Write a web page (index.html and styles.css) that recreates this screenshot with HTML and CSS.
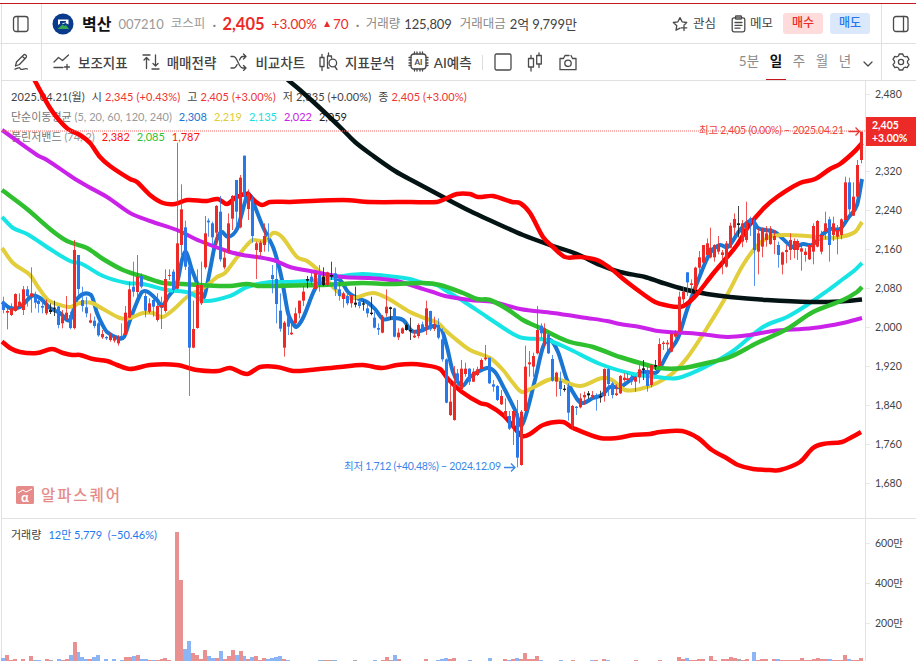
FILE: index.html
```html
<!DOCTYPE html>
<html lang="ko">
<head>
    <meta charset="UTF-8">
    <meta name="viewport" content="width=device-width, initial-scale=1.0">
    <title>벽산 007210</title>
    <link rel="stylesheet" href="styles.css">
</head>
<body>
    <header class="bar stock-bar">
        <div class="side-cell left">
            <svg class="icon" width="18" height="18" viewBox="0 0 18 18"><rect x="1.5" y="1.5" width="14.5" height="15" rx="2.5"/><path d="M6 1.5v15"/></svg>
        </div>
        <div class="stock-info">
            <svg class="logo" width="22" height="22" viewBox="0 0 22 22">
                <circle cx="11" cy="11" r="10.5" fill="#0a3a8c"/>
                <path d="M6 6.500h10.500v5l-3-1.500-2.500 1-1.500-1.500L6 12z" fill="#fff"/>
                <path d="M8 8h6v1.500l-3 .5-3 1z" fill="#0a3a8c"/>
                <path d="M5.500 16l5-4.500 2 1.500 1.500-1 3 4z" fill="#35a853"/>
            </svg>
            <span class="name">벽산</span>
            <span class="code">007210</span>
            <span class="market">코스피</span>
            <span class="dot">·</span>
            <span class="price">2,405</span>
            <span class="rate">+3.00%</span>
            <span class="diff"><i class="up"></i>70</span>
            <span class="dot dot-2">·</span>
            <span class="key">거래량</span>
            <span class="val">125,809</span>
            <span class="key key-2">거래대금</span>
            <span class="val">2억 9,799만</span>
        </div>
        <div class="actions">
            <svg class="icon star" width="17" height="17" viewBox="0 0 17 17"><path d="M8 13.200l-4 2 .8-4.500L1.300 7.500l4.600-.7L8 2.600l2.100 4.200 4.600.7-1.700 1.700M12 10v5.500M9.200 12.800h5.600"/></svg>
            <span class="action-text">관심</span>
            <svg class="icon memo" width="15" height="18" viewBox="0 0 15 18"><rect x="1.200" y="2.800" width="12.600" height="14" rx="1.800"/><rect x="4.500" y="1" width="6" height="3.200" rx=".8"/><path d="M4 7.500h7M4 10.300h7M4 13.200h5"/></svg>
            <span class="action-text">메모</span>
            <span class="btn buy">매수</span>
            <span class="btn sell">매도</span>
        </div>
        <div class="side-cell right">
            <svg class="icon" width="18" height="18" viewBox="0 0 18 18"><rect x="1.500" y="1.500" width="14.500" height="15" rx="2.500"/><path d="M11.500 1.500v15"/></svg>
        </div>
    </header>

    <nav class="bar tool-bar">
        <div class="side-cell left">
            <svg class="icon" width="18" height="18" viewBox="0 0 18 18"><path d="M2.500 13l1-4L10.800 1.800c1-1 3.500 1 2.500 2.400L6.500 11.500l-4 1.500M9.500 3.500l2.500 2.300M2 16.200c3-1.500 4.500-2 5-1s0 1.500 2 1.200 3.500-1.200 5.500-.4"/></svg>
        </div>
        <div class="tools">
            <span class="tool"><svg class="icon" width="18" height="18" viewBox="0 0 18 18"><path d="M1 9l4.500-4.500 4 3L15.500 2M1 14.500h9M14 11.500v5M11.500 14h5"/></svg>보조지표</span>
            <span class="tool"><svg class="icon" width="18" height="18" viewBox="0 0 18 18"><path d="M1 2h7M4.500 15.500V4.500M2 7l2.500-2.500L7 7M10 16h7M13.500 2v10.500M11 10.500l2.500 2.500 2.500-2.500"/></svg>매매전략</span>
            <span class="tool"><svg class="icon" width="18" height="18" viewBox="0 0 18 18"><path d="M1 3.500h2.500c4 0 5 11.500 9 11.500H16M1 15h2.500c1.600 0 2.700-1.500 3.600-3.500M9.500 7c.8-2 1.800-3.500 3.200-3.500H16M13.500 1L16 3.500 13.500 6M13.500 12.500L16 15l-2.500 2.500"/></svg>비교차트</span>
            <span class="tool"><svg class="icon" width="19" height="20" viewBox="0 0 19 20"><path d="M3 2.500v3M3 14.500v4M1 5.500h4v9H1zM9.500 1v3M12.500 6V4h-4v12H10M15.800 14.500l2.200 3"/><circle cx="13.800" cy="11" r="3.800"/></svg>지표분석</span>
            <span class="tool ai"><svg class="icon" width="21" height="21" viewBox="0 0 21 21"><rect x="3" y="3" width="15" height="15" rx="3"/><path d="M6.500 1v2M9 1v2M12 1v2M14.500 1v2M6.500 18v2M9 18v2M12 18v2M14.500 18v2M1 6.500h2M1 9h2M1 12h2M1 14.500h2M18 6.500h2M18 9h2M18 12h2M18 14.500h2"/><text x="10.500" y="13.800" class="chip-text">AI</text></svg>AI예측</span>
            <i class="sep"></i>
            <svg class="icon square" width="18" height="18" viewBox="0 0 18 18"><rect x="1" y="1" width="16" height="16" rx="1.500"/></svg>
            <svg class="icon candles" width="16" height="20" viewBox="0 0 16 20"><path d="M4 3.500v3M4 15v4M1.500 6.500h5V15h-5zM12 .8v2.700M12 12v3.500M9.700 3.500h4.600V12H9.700z"/></svg>
            <svg class="icon camera" width="18" height="17" viewBox="0 0 18 17"><path d="M10 1.500H6l-1.500 3H1v11.200h16V4.500h-3.500L12 1.500"/><circle cx="9" cy="9.300" r="3.200"/></svg>
        </div>
        <div class="periods">
            <span class="minute">5분</span>
            <span class="on">일</span>
            <span>주</span>
            <span>월</span>
            <span>년</span>
            <svg class="icon" width="10" height="6" viewBox="0 0 10 6"><path d="M1 1l4 4 4-4"/></svg>
        </div>
        <div class="side-cell right">
            <svg class="icon" width="18" height="18" viewBox="0 0 18 18"><path d="M7.200 1h3.600l.7 2 1.500.8 2.200-.4 1.800 3-1.500 1.700v1.800l1.500 1.700-1.800 3-2.200-.4-1.500.8-.7 2H7.200l-.7-2-1.500-.8-2.200.4-1.800-3 1.500-1.700V8.100L1 6.400l1.800-3 2.200.4L6.500 3z"/><circle cx="9" cy="9" r="2.600"/></svg>
        </div>
    </nav>

    <main class="chart">
        <div class="legend">
            <div class="row date-row"><span>2025.04.21(월)</span><span>시 <b class="c-up">2,345 (+0.43%)</b></span><span>고 <b class="c-up">2,405 (+3.00%)</b></span><span>저 <b>2,335 (+0.00%)</b></span><span>종 <b class="c-up">2,405 (+3.00%)</b></span></div>
            <div class="row ma-row"><span>단순이동평균 <em>(5, 20, 60, 120, 240)</em></span><b class="c-ma5">2,308</b><b class="c-ma20">2,219</b><b class="c-ma60">2,135</b><b class="c-ma120">2,022</b><b class="c-ma240">2,059</b></div>
            <div class="row bb-row"><span>볼린저밴드 <em>(74, 2)</em></span><b class="c-band">2,382</b><b class="c-mid">2,085</b><b class="c-band">1,787</b></div>
        </div>
        <div class="legend volume-legend">
            <div class="row"><span>거래량</span><b class="c-down">12만 5,779&nbsp; (−50.46%)</b></div>
        </div>
        <div class="watermark">
            <svg width="18" height="18" viewBox="0 0 18 18"><rect width="18" height="18" rx="1.500" fill="#e58c8a"/><path d="M2 7l5-3 3 2L16 3" stroke="#fff" fill="none"/><text x="9" y="15.500" class="alpha">α</text></svg>
            <span>알파스퀘어</span>
        </div>
        <svg id="plot" class="plot" width="916" height="580" viewBox="0 81 916 580"></svg>
    </main>
    <script src="chart.js"></script>
</body>
</html>
```
FILE: styles.css
```css
* {
    box-sizing: border-box;
}
body {
    margin: 0;
    padding-top: 3px;
    height: 661px;
    overflow: hidden;
    background-color: #fff;
    color: #424242;
    font-family: Lato, "Noto Sans CJK KR", sans-serif;
    display: flex;
    flex-direction: column;
}
.bar {
    display: flex;
    align-items: stretch;
    flex: none;
    margin-left: 1px;
    border-left: 1px solid #e0e0e0;
    border-bottom: 1px solid #e0e0e0;
    white-space: nowrap;
}
.stock-bar {
    height: 41px;
    margin-left: 0;
    padding-left: 1px;
    border-top: 1px solid #c4161c;
    border-left: 0;
    background: linear-gradient(#e0e0e0, #e0e0e0) 1px 0 / 1px 100% no-repeat;
}
.tool-bar {
    height: 37px;
}
.side-cell {
    display: flex;
    align-items: center;
    justify-content: center;
    flex: none;
}
.side-cell.left {
    width: 40px;
    border-right: 1px solid #e0e0e0;
}
.stock-bar .side-cell.left {
    width: 41px;
}
.side-cell.right {
    width: 35px;
    padding-left: 3px;
    border-left: 1px solid #e0e0e0;
}
.icon {
    flex: none;
    fill: none;
    stroke: #4a4a4a;
    stroke-width: 1.3;
    stroke-linecap: round;
    stroke-linejoin: round;
}

/* stock summary */
.stock-info {
    display: flex;
    align-items: center;
    flex: 1;
    padding-left: 10px;
}
.stock-info span {
    line-height: 24px;
}
.logo {
    flex: none;
}
.name {
    margin-left: 8px;
    font-size: 16px;
    font-weight: 700;
    color: #111;
}
.code {
    margin-left: 7px;
    font-size: 13px;
    color: #9a9a9a;
}
.market {
    margin-left: 7px;
    font-size: 12.500px;
    color: #9a9a9a;
}
.dot {
    margin: 0 6px 0 7px;
    color: #888;
}
.price {
    font-size: 16.500px;
    font-weight: 700;
    color: #ec2a28;
}
.rate, .diff {
    margin-left: 7px;
    font-size: 13.500px;
    color: #ec2a28;
}
.up {
    display: inline-block;
    margin-right: 3px;
    border: 3.500px solid transparent;
    border-top: 0;
    border-bottom: 6px solid #ec2a28;
    vertical-align: 2px;
}
.key {
    font-size: 12.500px;
    color: #8a8a8a;
}
.key-2 {
    margin-left: 8px;
}
.val {
    margin-left: 4px;
    font-size: 13px;
    letter-spacing: -.1px;
}
.actions {
    display: flex;
    align-items: center;
    padding-right: 11px;
    font-size: 12.500px;
}
.action-text {
    margin-left: 4px;
    padding-bottom: 2px;
}
.memo {
    margin-left: 15px;
}
.btn {
    width: 40px;
    height: 21px;
    border-radius: 3px;
    line-height: 20px;
    text-align: center;
    font-size: 12px;
    font-weight: 500;
}
.buy {
    margin-left: 10px;
    background-color: #fddcdb;
    color: #ec2a28;
}
.sell {
    margin-left: 7px;
    background-color: #dbe8fc;
    color: #2478ee;
}

/* toolbar */
.tools {
    display: flex;
    align-items: center;
    flex: 1;
    padding-left: 11px;
}
.tool {
    display: flex;
    align-items: center;
    gap: 7px;
    margin-right: 14px;
    padding-bottom: 1px;
    font-size: 13.500px;
    font-weight: 500;
}
.ai {
    gap: 5px;
    margin-left: -1px;
}
.chip-text {
    font-size: 8px;
    font-weight: 700;
    text-anchor: middle;
    fill: #4a4a4a;
    stroke: none;
}
.sep {
    width: 1px;
    height: 15px;
    margin: 0 11px 0 -4px;
    background-color: #ddd;
}
.candles {
    margin-left: 15px;
}
.camera {
    margin-left: 16px;
}
.periods {
    display: flex;
    align-items: center;
    font-size: 13.500px;
    color: #8c8c8c;
}
.periods span {
    width: 20px;
    height: 36px;
    line-height: 34px;
    margin-right: 3px;
    text-align: center;
}
.periods .minute {
    width: 24px;
    margin-right: 5px;
}
.periods .on {
    color: #111;
    font-weight: 700;
    border-bottom: 1px solid #c4161c;
}
.periods .icon {
    margin: 3px 8px 0 5px;
}

/* chart */
.chart {
    position: relative;
    flex: 1;
    margin-left: 1px;
    border-left: 1px solid #e0e0e0;
}
.plot {
    position: absolute;
    top: 0;
    left: -2px;
}
.legend {
    position: absolute;
    top: 6px;
    left: 9px;
    font-size: 11px;
    white-space: nowrap;
}
.volume-legend {
    top: 444px;
}
.row {
    display: flex;
    height: 20px;
    line-height: 20px;
    gap: 7px;
}
.date-row {
    letter-spacing: .12px;
}
.row b {
    font-weight: 400;
}
.row em {
    font-style: normal;
    color: #999;
}
.ma-row, .bb-row {
    color: #777;
}
.c-up { color: #ee3432; }
.c-down { color: #2478ee; }
.c-ma5 { color: #1976d2; }
.c-ma20 { color: #e0cc3a; }
.c-ma60 { color: #18e0e0; }
.c-ma120 { color: #c822e6; }
.c-ma240 { color: #222; }
.c-band { color: #f11; }
.c-mid { color: #2fbf2f; }
.watermark {
    position: absolute;
    top: 403px;
    left: 14px;
    display: flex;
    align-items: center;
    gap: 7px;
    font-size: 15.500px;
    font-weight: 500;
    letter-spacing: 1.900px;
    line-height: 22px;
    color: #e58c8a;
}
.alpha {
    font-size: 13px;
    font-weight: 700;
    letter-spacing: 0;
    text-anchor: middle;
    fill: #fff;
}
.axis {
    font-size: 10.500px;
    fill: #444;
}
.tag {
    font-size: 10.500px;
    font-weight: 700;
    fill: #fff;
}
.note {
    font-size: 10.500px;
}
```
FILE: chart.js
```js
const plot = document.getElementById('plot');
const COLORS = { r: '#ec2a28', b: '#2878ea', k: '#1a1a1a' };
const VOLUME_COLORS = { r: '#e99191', b: '#8cb5f5', k: '#aaa' };

// one day is 3.953px wide
const dayX = i => 3.400 + i * 3.953;

function add(tag, attrs, text) {
    const el = document.createElementNS('http://www.w3.org/2000/svg', tag);
    for (const key in attrs) el.setAttribute(key, attrs[key]);
    if (text) el.textContent = text;
    plot.appendChild(el);
    return el;
}

// color, high, body top, body bottom, low - in thirds of a pixel below `top`
const candles = [
    { top: 130, rows: `b 500 515 540 550,r 530 543 548 598,r 520 535 555 558,r 490 492 543 545,r 490 515 530 532,r 468 478 540 555,b 468 478 498 530,r 412 490 500 548,b 485 500 518 535,b 500 512 522 548,b 510 528 533 550,r 508 520 550 555,k 520 540 546 552,k 512 533 536 558,b 528 530 585 595,r 540 562 580 595,r 498 548 565 570,b 545 555 594 598,r 330 360 594 598,b 375 375 477 500,b 470 510 528 545,b 500 532 550 562,r 550 571 578 580,b 560 572 588 595,b 575 580 616 620,r 600 612 622 627,b 618 621 625 630,r 608 617 630 635,r 618 622 632 638,r 615 620 640 647,b 580 618 622 626,r 528 548 615 620,r 455 478 563 563,b 395 470 485 500,r 375 440 486 500,b 430 438 470 475,b 480 498 542 562,r 505 520 545 550,b 500 510 530 560,r 490 528 570 575,r 500 525 532 597,r 418 447 543 548,r 418 435 438 450,b 418 425 480 490,r 38 340 476 478,r 163 238 345 375,b 272 292 410 420,b 400 410 653 798,r 512 597 653 655,r 418 465 594 596,r 395 465 520 525,r 258 310 412 418,b 265 272 277 320,b 275 280 322 345,r 225 228 308 345,b 198 245 388 395,r 360 383 412 418,r 250 280 365 370` },
    { top: 130, rows: `r 195 198 266 300,b 150 150 245 290,r 135 143 292 295,b 77 77 200 220,r 178 190 237 270,b 195 205 318 338,r 335 340 360 447,r 332 338 366 378,r 280 318 345 365,b 280 325 325 365,b 405 435 447 490,b 400 447 522 580,b 490 542 596 605,r 573 578 653 680,b 545 563 590 615,r 570 608 613 615,r 533 550 580 590,r 512 512 550 565,r 468 485 512 528,k 438 447 452 475,b 425 440 455 465,r 425 430 477 478,b 405 435 465 485,k 412 440 465 468,r 425 427 465 468,k 395 435 440 450,b 412 430 478 498,b 460 478 498 512,r 485 490 507 533,b 485 498 520 526,r 490 495 520 533,k 470 518 524 532,b 505 515 528 535,k 512 520 524 542,b 510 535 550 562,k 500 548 552 556,b 545 563 593 595,b 580 594 599 615,r 555 560 608 610,r 478 530 550 560,k 530 532 537 570,b 533 535 620 622,r 595 608 622 630,r 592 595 610 612,k 580 585 600 602,k 563 600 604 630,r 600 617 622 624,r 580 585 618 625,b 575 583 598 605,r 512 535 590 615,b 542 543 598 603,r 560 583 597 603,b 565 585 623 628` },
    { top: 180, rows: `b 445 478 538 545,b 535 538 668 670,r 600 665 705 708,r 558 605 720 722,b 567 580 605 615,r 540 566 628 632,r 548 566 582 590,b 565 566 605 615,r 565 575 605 606,r 560 568 585 588,r 535 540 567 570,r 495 533 538 542,b 533 533 610 612,b 600 613 620 635,b 615 618 660 663,r 630 648 673 675,r 655 693 710 715,b 693 708 746 750,r 685 693 740 795,b 660 700 833 862,r 690 695 855 857,r 497 560 693 693,r 513 547 553 590,r 518 528 560 590,r 378 450 520 523,b 430 437 460 475,r 430 445 492 500,b 460 463 520 522,b 525 537 602 605,r 575 578 605 650,b 575 603 627 648,k 615 626 630 635,b 610 620 698 722,r 675 678 738 748,b 678 680 684 705,r 640 655 682 685,r 635 645 652 675,k 633 640 646 656,r 633 645 650 655,b 640 645 655 692,k 632 648 652 668,r 565 567 648 665,b 565 567 612 648,b 605 610 645 655,r 613 640 645 648,r 585 588 640 642,r 580 593 600 605,r 580 595 600 610,b 585 590 605 615,r 588 592 605 635,r 555 568 592 610,k 540 565 570 600,b 560 570 618 635` },
    { top: 120, rows: `r 733 735 795 802,k 720 735 740 750,r 655 672 738 740,r 663 668 672 690,r 660 668 673 713,r 640 642 695 697,r 630 640 650 655,r 515 530 635 636,r 500 515 538 558,b 457 457 487 528,r 478 490 495 520,r 440 443 510 515,r 393 412 443 460,r 375 375 428 432,r 355 370 405 408,r 323 383 412 415,r 373 375 412 425,r 348 375 395 403,r 390 397 405 463,r 363 370 440 443,r 308 317 383 385,r 280 297 323 345,k 258 310 315 352,r 300 310 365 382,r 245 305 360 368,b 290 295 310 348,b 295 300 390 498,r 325 340 395 463,r 323 325 380 412,r 318 340 360 380,r 318 325 372 375,r 330 348 360 402,b 365 375 405 443,r 395 397 434 463,r 375 390 396 430,r 340 360 390 420,r 355 363 390 415,r 358 363 390 420,r 370 385 395 452,r 385 395 405 425,r 370 375 418 420,r 310 318 395 433,r 300 303 380 382,r 332 345 395 403,r 275 310 335 358,b 290 298 375 425,r 290 310 345 363,r 315 330 350 403,r 295 298 345 358,r 170 187 300 303,b 173 187 268 285,r 187 230 287 288,r 120 135 230 233,r 35 35 120 130` }
];

const lines = [
    { name: 'ma5', color: '#1976d2', width: 4, points: '2,302 10,308 20,307 32,296 40,298 50,308 60,313 70,320 77,299 91,295 97,313 102,324 107,332 118,338 124,337 130,320 137,302 142,292 148,292 157,300 162,306 168,297 177,283 182,260 186,252 192,270 200,290 204,297 210,270 215,245 221,232 228,237 237,229 245,202 248,193 253,202 263,227 273,247 278,263 282,280 288,313 292,322 296,327 303,318 313,293 318,284 325,278 340,280 348,292 357,298 367,302 375,309 383,319 392,318 403,320 412,331 420,331 433,326 441,328 447,347 453,372 462,386 470,377 487,368 495,372 505,390 515,410 522,425 535,380 543,347 550,340 558,352 567,380 577,399 583,403 593,398 602,395 610,387 620,387 633,378 640,373 648,372 657,372 668,353 678,338 687,310 697,283 710,253 720,245 728,247 740,230 752,220 758,228 775,232 782,238 793,247 803,244 812,245 822,235 830,229 840,229 848,218 857,205 862,179' },
    { name: 'ma20', color: '#e2cd3b', width: 4, points: '2,248 13,263 30,275 38,287 48,300 60,305 70,307 80,303 92,303 103,309 120,318 130,318 143,313 153,313 162,317 173,310 187,297 203,288 210,283 217,277 225,273 235,260 247,245 253,240 265,241 273,233 282,237 297,257 307,261 320,272 333,287 343,296 353,298 373,293 387,298 410,312 427,319 438,323 445,330 453,337 470,350 490,358 503,370 513,383 522,392 532,388 548,380 557,379 580,386 602,378 612,380 625,390 640,389 657,383 673,373 687,358 707,328 727,295 743,265 758,245 773,236 807,236 822,238 840,237 855,232 862,222' },
    { name: 'ma60', color: '#17e5e5', width: 4, points: '2,217 13,228 27,234 50,249 70,261 82,264 103,276 127,283 143,284 167,290 190,293 205,301 230,296 247,287 270,282 290,282 320,280 343,276 363,274 397,277 410,279 423,283 437,285 445,290 463,301 487,317 513,334 523,338 547,340 567,348 600,364 633,374 657,377 678,378 707,366 733,351 763,327 787,317 807,305 827,291 843,279 855,270 862,263' },
    { name: 'ma120', color: '#cb22ea', width: 4, points: '2,130 37,155 47,160 72,177 87,186 107,197 130,213 150,221 177,230 200,241 230,252 243,255 273,260 290,267 310,271 343,277 370,278 397,281 420,288 433,292 445,296 470,300 493,302 520,309 553,313 587,318 607,321 620,324 640,327 658,331 700,334 727,337 750,335 773,331 813,328 843,323 862,318' },
    { name: 'ma240', color: '#041414', width: 4.500, points: '280,73 288,80 300,90 320,108 343,130 355,142 372,155 395,171 415,182 445,198 470,211 487,219 523,235 553,246 577,254 600,265 620,272 645,277 660,282 683,289 707,294 730,297 767,300 810,302 840,301.500 862,299.500' },
    { name: 'band-mid', color: '#2fc02f', width: 4.500, points: '2,190 27,209 50,229 67,241 87,248 103,259 123,270 147,278 163,283 183,284 200,285 230,286 247,284 260,286 320,285 343,284 362,283 390,284 423,283 440,285 463,293 477,299 490,300 507,309 523,320 540,328 567,341 593,347 620,357 640,363 660,368 683,368 707,363 730,357 757,343 787,329 813,312 843,300 857,292 862,287' },
    { name: 'band-top', color: '#fe0000', width: 4.500, points: '32,75 35,81 50,108 59,120 68,129 80,135 90,143 100,157 110,166 130,179 137,182 150,195 163,203 175,204 187,200 207,201 218,199 227,204 235,198 247,194 255,201 262,205 270,202 290,202 343,200 370,202 410,202 437,202 445,199 457,194 470,194 478,197 493,196 512,202 520,203 530,213 543,237 553,247 565,257 580,257 597,260 610,268 627,282 643,294 655,302 665,305 680,307 688,303 698,293 712,275 723,262 737,245 748,227 763,209 777,197 800,183 815,179 830,169 840,164 855,151 862,143' },
    { name: 'band-bottom', color: '#fe0000', width: 4.500, points: '2,341.500 10,348 20,352 37,353 52,349 63,353 72,355 80,355 93,359 107,361 117,365 130,369 150,365 177,365 197,370 218,371 230,368 247,374 260,367 277,367 293,371 310,370 340,367 363,365 382,368 397,365 412,364 423,365 440,369 448,379 462,392 480,403 488,405 503,415 513,426 522,436 530,434 543,425 563,422 573,428 600,438 617,438 633,435 650,434 660,432 682,431 698,438 712,450 728,459 738,465 753,469 770,470 780,470 800,462 813,448 823,444 842,442 852,437 861,432' }
];

// day, color, bar height
const volumes = '0 b 3,1 r 6,2 r 1,3 r 2,5 r 2,7 r 5,8 b 1,9 b 1,11 r 2,12 k 1,14 b 2,15 r 1,16 r 2,17 b 6,18 r 19,19 b 9,20 b 4,21 b 2,22 r 2,23 b 4,24 b 6,26 b 2,28 b 2,30 b 1,31 r 4,32 r 4,33 b 5,34 r 6,35 b 2,36 b 2,37 r 1,38 b 1,39 r 1,40 r 2,41 r 3,42 r 1,44 r 129,45 r 81,46 b 12,47 b 20,48 r 8,49 r 6,50 r 2,51 r 11,52 b 5,53 b 3,54 r 3,55 b 10,56 r 2,57 r 5,58 r 11,59 b 6,60 r 10,61 b 5,62 r 2,63 b 4,64 r 5,65 r 1,66 r 3,67 b 2,68 b 3,69 b 4,70 b 5,71 r 2,72 b 1,80 b 1,81 k 1,82 r 1,83 k 1,84 b 1,89 k 1,94 b 1,96 r 1,97 r 4,98 k 1,99 b 6,100 r 2,107 r 2,110 b 1,111 b 2,112 b 3,113 r 2,114 r 3,118 b 1,123 b 3,127 r 2,128 b 1,129 r 2,130 b 3,131 r 2,132 r 8,133 r 2,134 r 2,135 r 5,136 b 1,141 b 1,144 r 1,149 b 1,150 r 1,152 r 2,153 b 1,160 r 1,166 r 1,171 r 4,172 r 2,173 b 3,174 r 1,175 r 1,176 r 2,177 r 2,179 r 5,180 r 1,182 r 2,183 r 2,184 r 4,185 r 3,186 k 2,187 r 1,188 r 2,190 b 9,191 r 1,192 r 2,193 r 2,195 r 2,196 b 2,197 r 1,198 r 1,199 r 1,200 r 1,201 r 1,202 r 3,203 r 1,204 r 1,205 r 2,206 r 3,207 r 2,208 r 2,209 b 2,210 r 1,211 r 1,212 r 1,213 r 6,214 b 2,215 r 1,216 r 1,217 r 3';

function drawAxes() {
    add('path', { d: 'M865.500 81V661M2 518.500H916', stroke: '#e2e2e2', fill: 'none' });
    for (let price = 2480; price >= 1680; price -= 80) {
        const y = 93.500 + (2480 - price) * 0.4872;
        add('path', { d: `M866 ${Math.round(y) + .500}h4`, stroke: '#e8e8e8' });
        if (price !== 2400) {
            add('text', { x: 875, y: y + 4, class: 'axis' }, price.toLocaleString('en-US'));
        }
    }
    [[543, '600만'], [582.500, '400만'], [622.500, '200만']].forEach(([y, label]) => {
        add('path', { d: `M866 ${Math.round(y) + .500}h4`, stroke: '#e8e8e8' });
        add('text', { x: 875, y: y + 4, class: 'axis' }, label);
    });
}

function drawVolumes() {
    volumes.split(',').forEach(item => {
        const [day, color, height] = item.split(' ');
        const left = Math.round(dayX(+day) - 2);
        const right = Math.round(dayX(+day + 1) - 2);
        add('rect', { x: left, y: 661 - height, width: right - left, height: height, fill: VOLUME_COLORS[color] });
    });
}

// smooth path through all points
function curve(points) {
    const p = points.split(' ').map(s => s.split(',').map(Number));
    let d = `M${p[0]}`;
    for (let i = 0; i < p.length - 1; i++) {
        const p0 = p[i - 1] || p[i], p1 = p[i], p2 = p[i + 1], p3 = p[i + 2] || p2;
        const dx = (p2[0] - p1[0]) / 3;
        const m1 = (p2[1] - p0[1]) / (p2[0] - p0[0]);
        const m2 = (p3[1] - p1[1]) / (p3[0] - p1[0]);
        d += `C${p1[0] + dx},${p1[1] + m1 * dx} ${p2[0] - dx},${p2[1] - m2 * dx} ${p2}`;
    }
    return d;
}

function drawLines() {
    lines.forEach(line => {
        add('path', { d: curve(line.points), fill: 'none', stroke: line.color, 'stroke-width': line.width, 'stroke-linejoin': 'round' });
    });
}

function drawCandles() {
    let day = 0;
    candles.forEach(group => {
        group.rows.split(',').forEach(row => {
            const [color, ...v] = row.split(' ');
            const [high, open, close, low] = v.map(n => group.top + n / 3);
            const x = Math.round(dayX(day) - .500);
            add('rect', { x: x, y: high, width: 1, height: low - high, fill: COLORS[color], opacity: .8 });
            add('rect', { x: x - 1, y: open, width: 3, height: Math.max(close - open, 1), fill: COLORS[color] });
            day++;
        });
    });
}

function drawNotes() {
    add('path', { d: 'M2 131H866', stroke: '#f26a68', 'stroke-dasharray': '1 1' });
    add('text', { x: 699, y: 134, class: 'note', fill: '#ee4442', textLength: 145 }, '최고 2,405 (0.00%) − 2025.04.21');
    add('path', { d: 'M848.500 131.500h11m-4-4l4 4-4 4', stroke: '#ee3432', 'stroke-width': 1.300, fill: 'none' });
    add('text', { x: 344, y: 470, class: 'note', fill: '#3a85e8', textLength: 157 }, '최저 1,712 (+40.48%) − 2024.12.09');
    add('path', { d: 'M504 467.500h11m-4-4l4 4-4 4', stroke: '#3a85e8', 'stroke-width': 1.300, fill: 'none' });
    add('rect', { x: 866, y: 117, width: 50, height: 29, fill: '#ec2a28' });
    add('text', { x: 872, y: 129, class: 'tag' }, '2,405');
    add('text', { x: 872, y: 142, class: 'tag' }, '+3.00%');
}

drawAxes();
drawVolumes();
drawLines();
drawCandles();
drawNotes();
```
